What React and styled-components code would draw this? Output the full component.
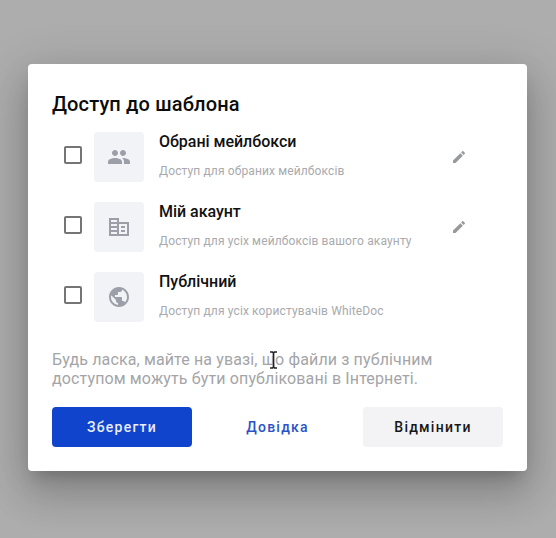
import React from 'react';
import styled, { createGlobalStyle } from 'styled-components';

const GlobalStyle = createGlobalStyle`
  * { box-sizing: border-box; }
  body {
    margin: 0;
    background: #adadad;
    font-family: Roboto, "Liberation Sans", sans-serif;
    overflow: hidden;
  }
`;

const Backdrop = styled.main`
  width: 556px;
  height: 538px;
  padding: 64px 29px 67px 28px;
  background: #adadad;
  overflow: hidden;
`;

const Dialog = styled.section`
  display: flex;
  flex-direction: column;
  height: 407px;
  padding: 24px;
  border-radius: 4px;
  background: #fff;
  box-shadow:
    0 11px 15px -7px rgba(0, 0, 0, 0.2),
    0 24px 38px 3px rgba(0, 0, 0, 0.14),
    0 9px 46px 8px rgba(0, 0, 0, 0.12);
`;

const Title = styled.h1`
  margin: 0;
  padding-top: 4px;
  height: 44px;
  font-size: 20px;
  font-weight: 500;
  line-height: 24px;
  letter-spacing: 0.15px;
  color: #0c0c0c;
`;

const Options = styled.ul`
  display: flex;
  flex-direction: column;
  gap: 20px;
  margin: 0;
  padding: 0;
  list-style: none;
`;

const Option = styled.li`
  display: flex;
  height: 50px;
  padding: 0 36px 0 9px;
`;

const Checkbox = styled.button`
  display: flex;
  width: 24px;
  height: 24px;
  margin: 11px 9px 0 0;
  padding: 0;
  border: 0;
  background: none;
  color: #757575;
`;

const Tile = styled.div`
  display: flex;
  align-items: center;
  justify-content: center;
  width: 50px;
  height: 50px;
  border-radius: 4px;
  background: #f2f3f7;
  color: #9c9fa8;
`;

const OptionText = styled.div`
  flex: 1;
  margin-left: 15px;
  white-space: nowrap;
`;

const OptionName = styled.div`
  height: 30px;
  font-size: 16px;
  font-weight: 500;
  line-height: 19px;
  letter-spacing: -0.03px;
  color: #111;
`;

const OptionHint = styled.div`
  padding-top: 1px;
  font-size: 12px;
  line-height: 16px;
  letter-spacing: 0.13px;
  color: #a9aaad;
`;

const EditButton = styled.button`
  display: flex;
  align-self: center;
  width: 16px;
  height: 16px;
  padding: 0;
  border: 0;
  background: none;
  color: #98999b;
`;

const Notice = styled.p`
  position: relative;
  margin: 28px 0 0;
  height: 57px;
  font-size: 16px;
  line-height: 19px;
  letter-spacing: 0.13px;
  white-space: nowrap;
  color: #a4a5a8;
`;

const TextCursor = styled.svg`
  position: absolute;
  left: 217px;
  top: 1px;
`;

const Actions = styled.footer`
  display: flex;
  justify-content: space-between;
`;

const palettes = {
  primary: { background: '#1144cc', color: '#e9eefc' },
  link: { background: 'transparent', color: '#2a53c9' },
  neutral: { background: '#f3f3f6', color: '#171717' },
};

const Button = styled.button`
  width: 140px;
  height: 40px;
  padding: 0;
  border: 0;
  border-radius: 4px;
  font: 500 14px/20px Roboto, "Liberation Sans", sans-serif;
  letter-spacing: 1.25px;
  background: ${(p) => palettes[p.$tone].background};
  color: ${(p) => palettes[p.$tone].color};
`;

const Icon = ({ d, size = 24 }) => (
  <svg width={size} height={size} viewBox="0 0 24 24" fill="currentColor" aria-hidden="true">
    <path d={d} />
  </svg>
);

const icons = {
  box: 'M19 5v14H5V5h14m0-2H5c-1.1 0-2 .9-2 2v14c0 1.1.9 2 2 2h14c1.1 0 2-.9 2-2V5c0-1.1-.9-2-2-2z',
  people:
    'M16 11c1.66 0 2.99-1.34 2.99-3S17.66 5 16 5c-1.66 0-3 1.34-3 3s1.34 3 3 3zm-8 0c1.66 0 2.99-1.34 2.99-3S9.66 5 8 5C6.34 5 5 6.34 5 8s1.34 3 3 3zm0 2c-2.33 0-7 1.17-7 3.5V19h14v-2.5c0-2.33-4.67-3.5-7-3.5zm8 0c-.29 0-.62.02-.97.05 1.16.84 1.97 1.97 1.97 3.45V19h6v-2.5c0-2.33-4.67-3.5-7-3.5z',
  business:
    'M12 7V3H2v18h20V7H12zm-2 12H4v-2h6v2zm0-4H4v-2h6v2zm0-4H4V9h6v2zm0-4H4V5h6v2zm10 12h-8V9h8v10zm-2-8h-4v2h4v-2zm0 4h-4v2h4v-2z',
  globe:
    'M12 2C6.48 2 2 6.48 2 12s4.48 10 10 10 10-4.48 10-10S17.52 2 12 2zm-1 17.93c-3.95-.49-7-3.85-7-7.93 0-.62.08-1.21.21-1.79L9 15v1c0 1.1.9 2 2 2v1.93zm6.9-2.54c-.26-.81-1-1.39-1.9-1.39h-1v-3c0-.55-.45-1-1-1H8v-2h2c.55 0 1-.45 1-1V7h2c1.1 0 2-.9 2-2v-.41c2.93 1.19 5 4.06 5 7.41 0 2.08-.8 3.97-2.1 5.39z',
  edit:
    'M3 17.25V21h3.75L17.81 9.94l-3.75-3.75L3 17.25zM20.71 7.04c.39-.39.39-1.02 0-1.41l-2.34-2.34c-.39-.39-1.02-.39-1.41 0l-1.83 1.83 3.75 3.75 1.83-1.83z',
};

const options = [
  { icon: 'people', name: 'Обрані мейлбокси', hint: 'Доступ для обраних мейлбоксів', editable: true },
  { icon: 'business', name: 'Мій акаунт', hint: 'Доступ для усіх мейлбоксів вашого акаунту', editable: true },
  { icon: 'globe', name: 'Публічний', hint: 'Доступ для усіх користувачів WhiteDoc', editable: false },
];

export default function App() {
  return (
    <>
      <GlobalStyle />
      <Backdrop>
        <Dialog role="dialog" aria-label="Доступ до шаблона">
          <Title>Доступ до шаблона</Title>
          <Options>
            {options.map((o) => (
              <Option key={o.name}>
                <Checkbox role="checkbox" aria-checked="false" aria-label={o.name}>
                  <Icon d={icons.box} />
                </Checkbox>
                <Tile>
                  <Icon d={icons[o.icon]} />
                </Tile>
                <OptionText>
                  <OptionName>{o.name}</OptionName>
                  <OptionHint>{o.hint}</OptionHint>
                </OptionText>
                {o.editable && (
                  <EditButton aria-label="Редагувати">
                    <Icon d={icons.edit} size={16} />
                  </EditButton>
                )}
              </Option>
            ))}
          </Options>
          <Notice>
            Будь ласка, майте на увазі, що файли з публічним
            <br />
            доступом можуть бути опубліковані в Інтернеті.
            <TextCursor width="9" height="18" viewBox="0 0 9 18" fill="none" aria-hidden="true">
              <path d="M1 1h2.5l1 1 1-1H8M1 17h2.5l1-1 1 1H8M4.5 2v14" stroke="#fff" strokeWidth="3" opacity=".6" />
              <path d="M1 1h2.5l1 1 1-1H8M1 17h2.5l1-1 1 1H8M4.5 2v14" stroke="#222" strokeWidth="1.7" />
            </TextCursor>
          </Notice>
          <Actions>
            <Button $tone="primary">Зберегти</Button>
            <Button $tone="link">Довідка</Button>
            <Button $tone="neutral">Відмінити</Button>
          </Actions>
        </Dialog>
      </Backdrop>
    </>
  );
}
